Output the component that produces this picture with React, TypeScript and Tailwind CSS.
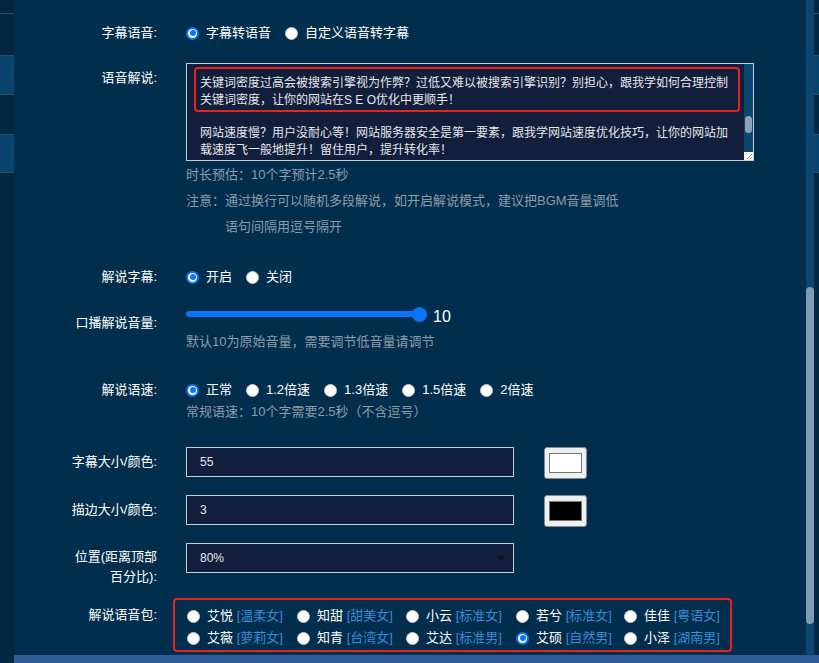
import React from "react";

function Radio({ checked }: { checked?: boolean }) {
  if (checked) {
    return (
      <span className="flex h-[13px] w-[13px] shrink-0 items-center justify-center rounded-full bg-[#0b74f8]">
        <span className="flex h-[9px] w-[9px] items-center justify-center rounded-full bg-white">
          <span className="h-[6px] w-[6px] rounded-full bg-[#0b74f8]" />
        </span>
      </span>
    );
  }
  return <span className="h-[13px] w-[13px] shrink-0 rounded-full border border-[#c8c8c8] bg-white" />;
}

function RadioGroup({ items, active }: { items: string[]; active: number }) {
  return (
    <div className="flex h-[20px] items-center">
      {items.map((t, i) => (
        <label key={t} className="mr-[14px] flex items-center gap-[7px]">
          <Radio checked={i === active} />
          <span className="whitespace-nowrap">{t}</span>
        </label>
      ))}
    </div>
  );
}

function Strip() {
  return (
    <div className="flex h-full w-full flex-col bg-[#022844]">
      <div className="h-[13px]" />
      <div className="h-[1px] bg-[#3b4a56]" />
      <div className="h-[41px]" />
      <div className="h-[1px] bg-[#3b4a56]" />
      <div className="h-[38px] bg-[#07446e]" />
      <div className="h-[1px] bg-[#3b4a56]" />
      <div className="h-[39px]" />
      <div className="h-[1px] bg-[#3b4a56]" />
      <div className="h-[37px] bg-[#07446e]" />
      <div className="h-[1px] bg-[#3b4a56]" />
    </div>
  );
}

const voices: { name: string; tag: string; on?: boolean }[][] = [
  [
    { name: "艾悦", tag: "温柔女" },
    { name: "知甜", tag: "甜美女" },
    { name: "小云", tag: "标准女" },
    { name: "若兮", tag: "标准女" },
    { name: "佳佳", tag: "粤语女" },
  ],
  [
    { name: "艾薇", tag: "萝莉女" },
    { name: "知青", tag: "台湾女" },
    { name: "艾达", tag: "标准男" },
    { name: "艾硕", tag: "自然男", on: true },
    { name: "小泽", tag: "湖南男" },
  ],
];
const colW = ["w-[110px]", "w-[109px]", "w-[110px]", "w-[108px]", ""];

function Label({ children, pt = "" }: { children: React.ReactNode; pt?: string }) {
  return (
    <div className={`w-[143px] shrink-0 text-right leading-[20px] text-white ${pt}`}>{children}</div>
  );
}

export default function App() {
  return (
    <div className="flex h-[663px] w-[819px] overflow-hidden bg-[#012e4d] font-['Liberation_Sans','Noto_Sans_CJK_SC',sans-serif] text-[13px]">
      <div className="h-full w-[14px] shrink-0">
        <Strip />
      </div>
      <div className="flex flex-1 flex-col">
        <div className="flex h-[655px]">
          <main className="w-[792px] overflow-hidden pt-[23px] text-white">
            {/* 字幕语音 */}
            <div className="flex">
              <Label>字幕语音:</Label>
              <div className="ml-[29px]">
                <RadioGroup items={["字幕转语音", "自定义语音转字幕"]} active={0} />
              </div>
            </div>

            {/* 语音解说 */}
            <div className="mt-[20px] flex">
              <Label pt="pt-[5px]">语音解说:</Label>
              <div className="ml-[29px]">
                <div className="flex h-[98px] w-[568px] border border-[#c9cdd4] bg-[#111e3c] text-[12px] leading-[17px] text-[#e8e8e8]">
                  <div className="flex-1 overflow-hidden whitespace-nowrap">
                    <div className="ml-[7px] mr-[4px] mt-[3px] rounded-[4px] border-[2px] border-[#e8231d] pb-[1px] pl-[4px] pt-[6px]">
                      <div>关键词密度过高会被搜索引擎视为作弊？过低又难以被搜索引擎识别？别担心，跟我学如何合理控制</div>
                      <div>关键词密度，让你的网站在S E O优化中更顺手！</div>
                    </div>
                    <div className="mt-[13px] pl-[13px]">
                      <div>网站速度慢？用户没耐心等！网站服务器安全是第一要素，跟我学网站速度优化技巧，让你的网站加</div>
                      <div>载速度飞一般地提升！留住用户，提升转化率！</div>
                    </div>
                  </div>
                  <div className="flex w-[9px] flex-col bg-[#0a4670]">
                    <div className="h-[52px]" />
                    <div className="mx-[1px] h-[17px] rounded-full bg-[#8ea3b7]" />
                    <div className="flex-1" />
                    <div className="relative h-[8px] bg-white">
                      <svg className="absolute inset-0" width="9" height="8" viewBox="0 0 9 8">
                        <path d="M8 2 L3 7 M8 5 L6 7" stroke="#888" strokeWidth="1" />
                      </svg>
                    </div>
                  </div>
                </div>
                <div className="mt-[1px] leading-[26px] text-[#8e9ba8]">
                  <div>时长预估：10个字预计2.5秒</div>
                  <div>注意：通过换行可以随机多段解说，如开启解说模式，建议把BGM音量调低</div>
                  <div className="pl-[39px]">语句间隔用逗号隔开</div>
                </div>
              </div>
            </div>

            {/* 解说字幕 */}
            <div className="mt-[27px] flex">
              <Label>解说字幕:</Label>
              <div className="ml-[29px]">
                <RadioGroup items={["开启", "关闭"]} active={0} />
              </div>
            </div>

            {/* 音量 */}
            <div className="mt-[18px] flex">
              <Label pt="pt-[8px]">口播解说音量:</Label>
              <div className="ml-[29px]">
                <div className="flex h-[20px] items-center">
                  <div className="relative -mt-[2px] h-[6px] w-[241px] rounded-full bg-[#0b74f8]">
                    <span className="absolute right-[0px] top-[-4px] h-[15px] w-[15px] rounded-full bg-[#0b74f8]" />
                  </div>
                  <span className="ml-[6px] mt-[3px] text-[16px] leading-[20px]">10</span>
                </div>
                <div className="mt-[7px] leading-[20px] text-[#8e9ba8]">默认10为原始音量，需要调节低音量请调节</div>
              </div>
            </div>

            {/* 语速 */}
            <div className="mt-[28px] flex">
              <Label>解说语速:</Label>
              <div className="ml-[29px]">
                <RadioGroup items={["正常", "1.2倍速", "1.3倍速", "1.5倍速", "2倍速"]} active={0} />
                <div className="mt-[2px] leading-[20px] text-[#8e9ba8]">常规语速：10个字需要2.5秒（不含逗号）</div>
              </div>
            </div>

            {/* 字幕大小 */}
            <div className="mt-[25px] flex h-[30px] items-start">
              <Label pt="pt-[5px]">字幕大小/颜色:</Label>
              <div className="ml-[29px] flex items-start">
                <div className="flex h-[30px] w-[328px] items-center border border-[#c9cdd4] bg-[#111e3c] pl-[13px] text-[12px] text-[#e8e8e8]">55</div>
                <div className="ml-[30px] h-[32px] w-[43px] rounded-[3px] border border-[#8a8a8a] bg-[#efefef] px-[4px] py-[5px]">
                  <div className="h-full w-full border border-[#777] bg-white" />
                </div>
              </div>
            </div>

            {/* 描边 */}
            <div className="mt-[18px] flex h-[30px] items-start">
              <Label pt="pt-[5px]">描边大小/颜色:</Label>
              <div className="ml-[29px] flex items-start">
                <div className="flex h-[30px] w-[328px] items-center border border-[#c9cdd4] bg-[#111e3c] pl-[13px] text-[12px] text-[#e8e8e8]">3</div>
                <div className="ml-[30px] h-[32px] w-[43px] rounded-[3px] border border-[#8a8a8a] bg-[#efefef] px-[4px] py-[5px]">
                  <div className="h-full w-full border border-[#777] bg-black" />
                </div>
              </div>
            </div>

            {/* 位置 */}
            <div className="mt-[18px] flex items-start">
              <Label pt="pt-[4px]">
                位置(距离顶部
                <br />
                百分比):
              </Label>
              <div className="ml-[29px]">
                <div className="flex h-[30px] w-[328px] items-center justify-between border border-[#c9cdd4] bg-[#111e3c] pl-[13px] pr-[8px] text-[12px] text-[#e8e8e8]">
                  <span>80%</span>
                  <svg width="8" height="5" viewBox="0 0 8 5">
                    <path d="M0 0 H8 L4 4.5 Z" fill="#111" />
                  </svg>
                </div>
              </div>
            </div>

            {/* 语音包 */}
            <div className="mt-[11px] flex">
              <Label pt="pt-[7px]">解说语音包:</Label>
              <div className="ml-[16px] rounded-[4px] border-[2px] border-[#e8231d] pb-[1px] pl-[12px] pr-[10px] pt-[5px]">
                {voices.map((row, r) => (
                  <div key={r} className="flex h-[22px] items-center">
                    {row.map((v, c) => (
                      <label key={v.name} className={`flex items-center gap-[7px] ${colW[c]}`}>
                        <Radio checked={v.on} />
                        <span className="whitespace-nowrap">
                          {v.name} <span className="text-[#3b8ad6]">[{v.tag}]</span>
                        </span>
                      </label>
                    ))}
                  </div>
                ))}
              </div>
            </div>
          </main>
          <div className="flex w-[8px] flex-col bg-[#0a4670]">
            <div className="h-[287px]" />
            <div className="h-[337px] rounded-full bg-[#7f9cb3]" />
            <div className="flex-1" />
          </div>
          <div className="w-[5px]">
            <Strip />
          </div>
        </div>
        <div className="h-[8px] bg-[#2f5c96]" />
      </div>
    </div>
  );
}
